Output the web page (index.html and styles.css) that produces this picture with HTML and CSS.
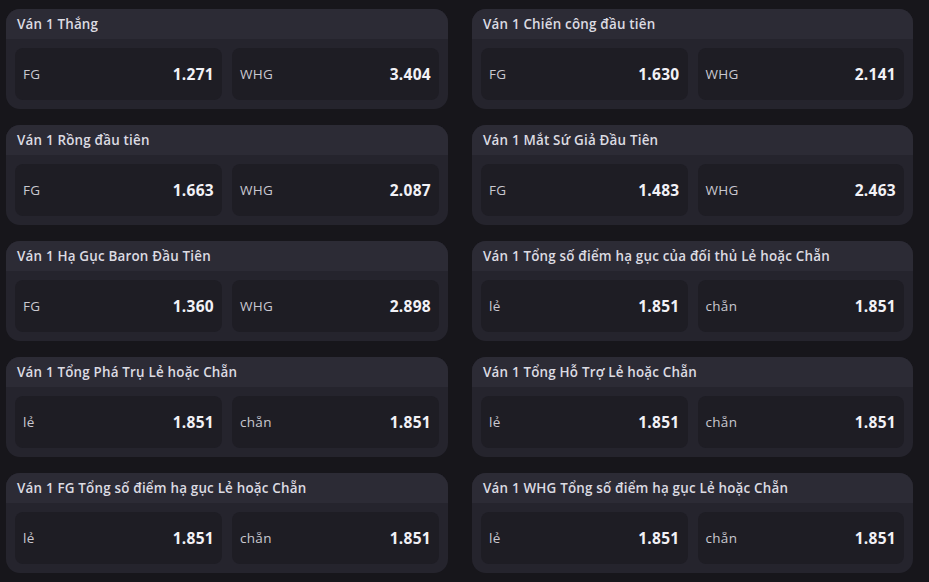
FILE: index.html
```html
<!DOCTYPE html>
<html lang="vi">
<head>
  <meta charset="UTF-8" />
  <meta name="viewport" content="width=device-width, initial-scale=1.0"/>
  <title>Kèo cược ván 1</title>
  <link rel="stylesheet" href="styles.css">
</head>
<body>
  <div class="markets">
    <div class="market">
      <div class="market-title">Ván 1 Thắng</div>
      <div class="odds">
        <div class="odd"><span class="odd-name">FG</span><span class="odd-value">1.271</span></div>
        <div class="odd"><span class="odd-name">WHG</span><span class="odd-value">3.404</span></div>
      </div>
    </div>
    <div class="market">
      <div class="market-title">Ván 1 Chiến công đầu tiên</div>
      <div class="odds">
        <div class="odd"><span class="odd-name">FG</span><span class="odd-value">1.630</span></div>
        <div class="odd"><span class="odd-name">WHG</span><span class="odd-value">2.141</span></div>
      </div>
    </div>
    <div class="market">
      <div class="market-title">Ván 1 Rồng đầu tiên</div>
      <div class="odds">
        <div class="odd"><span class="odd-name">FG</span><span class="odd-value">1.663</span></div>
        <div class="odd"><span class="odd-name">WHG</span><span class="odd-value">2.087</span></div>
      </div>
    </div>
    <div class="market">
      <div class="market-title">Ván 1 Mắt Sứ Giả Đầu Tiên</div>
      <div class="odds">
        <div class="odd"><span class="odd-name">FG</span><span class="odd-value">1.483</span></div>
        <div class="odd"><span class="odd-name">WHG</span><span class="odd-value">2.463</span></div>
      </div>
    </div>
    <div class="market">
      <div class="market-title">Ván 1 Hạ Gục Baron Đầu Tiên</div>
      <div class="odds">
        <div class="odd"><span class="odd-name">FG</span><span class="odd-value">1.360</span></div>
        <div class="odd"><span class="odd-name">WHG</span><span class="odd-value">2.898</span></div>
      </div>
    </div>
    <div class="market">
      <div class="market-title">Ván 1 Tổng số điểm hạ gục của đối thủ Lẻ hoặc Chẵn</div>
      <div class="odds">
        <div class="odd"><span class="odd-name">lẻ</span><span class="odd-value">1.851</span></div>
        <div class="odd"><span class="odd-name">chẵn</span><span class="odd-value">1.851</span></div>
      </div>
    </div>
    <div class="market">
      <div class="market-title">Ván 1 Tổng Phá Trụ Lẻ hoặc Chẵn</div>
      <div class="odds">
        <div class="odd"><span class="odd-name">lẻ</span><span class="odd-value">1.851</span></div>
        <div class="odd"><span class="odd-name">chẵn</span><span class="odd-value">1.851</span></div>
      </div>
    </div>
    <div class="market">
      <div class="market-title">Ván 1 Tổng Hỗ Trợ Lẻ hoặc Chẵn</div>
      <div class="odds">
        <div class="odd"><span class="odd-name">lẻ</span><span class="odd-value">1.851</span></div>
        <div class="odd"><span class="odd-name">chẵn</span><span class="odd-value">1.851</span></div>
      </div>
    </div>
    <div class="market">
      <div class="market-title">Ván 1 FG Tổng số điểm hạ gục Lẻ hoặc Chẵn</div>
      <div class="odds">
        <div class="odd"><span class="odd-name">lẻ</span><span class="odd-value">1.851</span></div>
        <div class="odd"><span class="odd-name">chẵn</span><span class="odd-value">1.851</span></div>
      </div>
    </div>
    <div class="market">
      <div class="market-title">Ván 1 WHG Tổng số điểm hạ gục Lẻ hoặc Chẵn</div>
      <div class="odds">
        <div class="odd"><span class="odd-name">lẻ</span><span class="odd-value">1.851</span></div>
        <div class="odd"><span class="odd-name">chẵn</span><span class="odd-value">1.851</span></div>
      </div>
    </div>
  </div>
</body>
</html>
```

FILE: styles.css
```css
body {
  margin: 0;
  background: #17161b;
  font-family: "Open Sans", "Liberation Sans", sans-serif;
  color: #e4e3ea;
}
.markets {
  display: grid;
  grid-template-columns: 442px 441px;
  column-gap: 24px;
  row-gap: 16px;
  padding: 9px 0 0 6px;
}
.market {
  background: #25242d;
  border-radius: 14px;
  overflow: hidden;
  height: 100px;
}
.market-title {
  background: #2c2b35;
  height: 30px;
  line-height: 30px;
  padding: 0 11px;
  font-size: 13.4px;
  font-weight: 600;
  letter-spacing: 0.2px;
  color: #dcdbe2;
  white-space: nowrap;
}
.odds {
  display: grid;
  grid-template-columns: 1fr 1fr;
  gap: 10px;
  padding: 9px;
}
.odd {
  background: #1e1d24;
  border-radius: 8px;
  height: 52px;
  display: flex;
  align-items: center;
  justify-content: space-between;
  padding: 0 8px;
}
.odd-name {
  font-size: 13.5px;
  letter-spacing: 0.3px;
  color: #c9c8d0;
}
.odd-value {
  font-size: 15.5px;
  font-weight: 700;
  letter-spacing: 0.3px;
  color: #f2f1f6;
}
```
